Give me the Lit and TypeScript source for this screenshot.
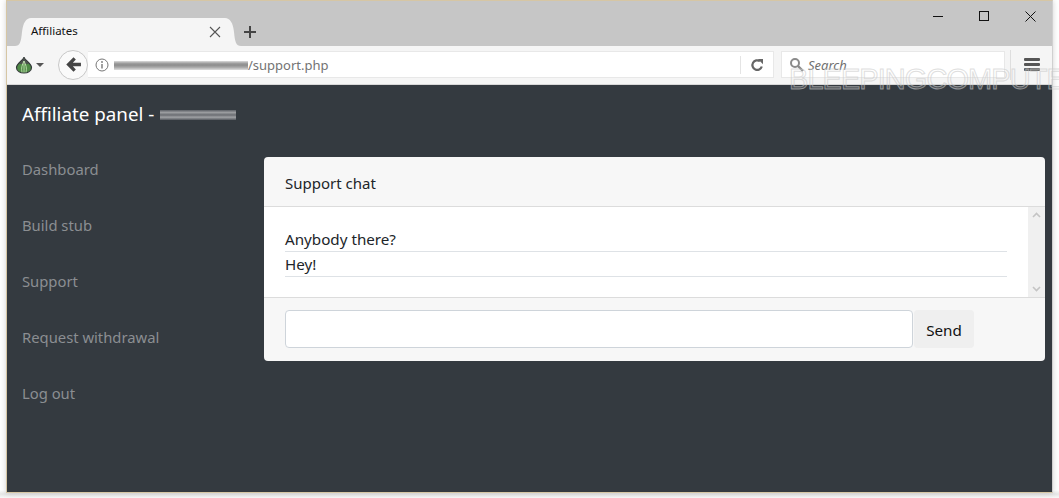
import { LitElement, html, css } from "lit";
import { customElement } from "lit/decorators.js";

const FONT = css`"Noto Sans", "Open Sans", sans-serif`;

@customElement("app-root")
export class AppRoot extends LitElement {
  static styles = css`
    :host {
      display: block;
      width: 1059px;
      height: 498px;
      position: relative;
      overflow: hidden;
      background: linear-gradient(#fff 0, #fff 490px, #e6e6e6 494px, #f8f8f8 498px);
      font-family: ${FONT};
      box-sizing: border-box;
    }
    * { box-sizing: border-box; }
    .win {
      margin: 0 6px 0 6px;
      height: 493px;
      display: flex;
      flex-direction: column;
      border-top: 1px solid #d6c6a4;
      border-bottom: 1px solid #d6c6a4;
      border-left: 1px solid #d6c6a4;
      border-right: 1px solid #d0d0d0;
      background: #343a40;
      box-shadow: 0 0 6px rgba(0,0,0,.18);
    }
    .titlebar {
      height: 45px;
      background: #c6c6c6;
      position: relative;
      display: flex;
      align-items: flex-end;
      padding-left: 8px;
      flex: none;
    }
    .tabshape { width: 226px; height: 28px; display: block; flex: none; }
    .tabwrap { position: relative; width: 226px; height: 28px; flex: none; }
    .tabtext {
      position: absolute; left: 16px; top: 5px;
      font-size: 11.5px; line-height: 16px; color: #111;
    }
    .tabx { position: absolute; left: 194px; top: 8px; width: 12px; height: 12px; }
    .plus { width: 14px; height: 14px; margin: 0 0 7px 2px; }
    .winbtns {
      position: absolute; right: -1px; top: 0; display: flex;
    }
    .winbtn { width: 46px; height: 30px; display: flex; align-items: center; justify-content: center; }
    .toolbar {
      height: 39px;
      flex: none;
      background: #f5f5f5;
      display: flex;
      align-items: center;
      padding: 0 0 1px 8px;
      border-bottom: 1px solid #d8d8d8;
    }
    .onion { width: 18px; height: 18px; flex: none; }
    .caret { width: 0; height: 0; border-left: 4px solid transparent; border-right: 4px solid transparent; border-top: 4px solid #555; margin: 0 0 0 3px; flex: none; }
    .urlbar {
      width: 686px;
      height: 27px;
      flex: none;
      background: #fff;
      border: 1px solid #e8e8e8;
      border-left: none;
      display: flex;
      align-items: center;
      position: relative;
    }
    .back {
      width: 30px; height: 30px; border-radius: 50%;
      background: #fafafa; border: 1px solid #c8c8c8;
      display: flex; align-items: center; justify-content: center;
      margin-left: 14px; flex: none;
    }
    .info { width: 14px; height: 14px; margin-left: 7px; flex: none; }
    .blur {
      background: linear-gradient(#dcdcdc, #a0a0a0 25%, #8c8c8c 45%, #a8a8a8 70%, #dedede);
      filter: blur(.7px);
      flex: none;
    }
    .blur.url { width: 134px; height: 9px; margin-left: 5px; margin-top: 2px; }
    .path { font-size: 13px; color: #737373; line-height: 18px; }
    .reload-box {
      margin-left: auto; width: 33px; height: 18px;
      border-left: 1px solid #e4e4e4;
      display: flex; align-items: center; justify-content: center;
    }
    .search {
      margin-left: 7px; width: 224px; height: 27px; flex: none;
      background: #fff; border: 1px solid #e8e8e8;
      display: flex; align-items: center; padding-left: 7px; gap: 4px;
    }
    .search span { font-size: 13px; font-style: italic; color: #6f6f6f; }
    .sep { width: 1px; height: 30px; background: #dedede; margin-left: 5px; flex: none; }
    .burger { margin-left: 13px; width: 16px; display: flex; flex-direction: column; gap: 2px; flex: none; }
    .burger i { display: block; height: 3px; border-radius: 1px; background: #555; }
    .page {
      flex: 1;
      display: flex;
      flex-direction: column;
      background: #343a40;
      padding-left: 15px;
    }
    .brand {
      height: 72px; flex: none;
      display: flex; align-items: center; gap: 6px;
      color: #fff; font-size: 18.8px; padding-bottom: 14px;
    }
    .blur.brandbar {
      width: 76px; height: 10px; margin-top: 2px;
      background: linear-gradient(#5c6066, #9a9c9f 25%, #6a6d72 50%, #a0a2a5 72%, #55595f);
    }
    .cols { display: flex; }
    .side { width: 242px; flex: none; display: flex; flex-direction: column; margin-top: -2px; }
    .side a {
      height: 56px; line-height: 28px;
      font-size: 14.8px; color: #8b8e92;
    }
    .card {
      width: 781px; height: 204px; flex: none;
      border-radius: 4px; overflow: hidden;
      background: #f7f7f7;
      display: flex; flex-direction: column;
      color: #212529;
    }
    .card-h {
      height: 50px; flex: none; display: flex; align-items: center;
      padding: 2px 0 0 21px; font-size: 15px;
      border-bottom: 1px solid #dcdcdc;
    }
    .card-b {
      height: 91px; flex: none; background: #fff; display: flex;
      border-bottom: 1px solid #dcdcdc;
    }
    .msgs { flex: 1; padding: 20px 21px 0 21px; }
    .msg { height: 25px; line-height: 25px; font-size: 15.2px; border-bottom: 1px solid #dee2e6; }
    .sb { width: 17px; flex: none; background: #f0f0f0; display: flex; flex-direction: column; justify-content: space-between; align-items: center; padding: 5px 0; }
    .card-f { flex: 1; display: flex; padding: 12px 0 0 21px; gap: 1px; }
    .input { width: 628px; height: 38px; background: #fff; border: 1px solid #ced4da; border-radius: 4px; }
    .send {
      width: 60px; height: 38px; background: #efefef; border-radius: 4px;
      display: flex; align-items: center; justify-content: center;
      font-size: 15.2px; color: #111; padding-top: 1px;
    }
    .wm {
      position: absolute; left: 789px; top: 60px;
      font-size: 29px; line-height: 38px; white-space: nowrap;
      letter-spacing: -.95px;
      font-family: "Liberation Sans", sans-serif;
      color: rgba(255,255,255,.12);
      -webkit-text-stroke: 1px rgba(200,200,200,.6);
      pointer-events: none;
    }
  `;

  render() {
    return html`
      <div class="win">
        <div class="titlebar">
          <div class="tabwrap">
            <svg class="tabshape" viewBox="0 0 226 28">
              <path d="M0 28C5 28 6 24 7 14 8 5 11 0 16 0H210C215 0 218 5 219 14 220 24 221 28 226 28Z" fill="#f5f5f5" />
            </svg>
            <span class="tabtext">Affiliates</span>
            <svg class="tabx" viewBox="0 0 12 12"><path d="M1 1 11 11M11 1 1 11" stroke="#555" stroke-width="1.1" fill="none" /></svg>
          </div>
          <svg class="plus" viewBox="0 0 14 14"><path d="M7 1V13M1 7H13" stroke="#444" stroke-width="2" fill="none" /></svg>
          <div class="winbtns">
            <div class="winbtn"><svg width="10" height="10"><path d="M0 5.5H10" stroke="#111" /></svg></div>
            <div class="winbtn"><svg width="10" height="10"><rect x=".5" y=".5" width="9" height="9" fill="none" stroke="#111" /></svg></div>
            <div class="winbtn"><svg width="11" height="11"><path d="M.5.5 10.5 10.5M10.5.5.5 10.5" stroke="#111" fill="none" /></svg></div>
          </div>
        </div>
        <div class="toolbar">
          <svg class="onion" viewBox="0 0 18 18">
            <path d="M9 1C9 4 1.500 7 1.500 11.500 1.500 15 5 17 9 17 13 17 16.500 15 16.500 11.500 16.500 7 9 4 9 1Z" fill="#4f8a46" stroke="#33383a" stroke-width="1.2" />
            <path d="M9 1C8 4 5.500 5.500 4 8L14 8C12.500 5.500 10 4 9 1Z" fill="#4a4f4c" />
            <path d="M9 5C7 9 6 12 7 16.500M9 5C11 9 12 12 11 16.500M9 5V16.500" stroke="#bfe0ae" stroke-width=".9" fill="none" />
          </svg>
          <span class="caret"></span>
          <div class="back">
            <svg width="17" height="17" viewBox="0 0 16 16"><path d="M8 1.200 1.200 8 8 14.800 10.200 12.600 7.400 9.700H15V6.300H7.400L10.200 3.400Z" fill="#444" /></svg>
          </div>
          <div class="urlbar">
            <svg class="info" viewBox="0 0 14 14">
              <circle cx="7" cy="7" r="6" fill="none" stroke="#777" stroke-width="1" />
              <path d="M7 6V10.500" stroke="#777" stroke-width="1.400" /><circle cx="7" cy="4" r=".9" fill="#777" />
            </svg>
            <div class="blur url"></div>
            <span class="path">/support.php</span>
            <div class="reload-box">
              <svg width="14" height="14" viewBox="0 0 14 14"><path d="M11.800 8.500A4.800 4.800 0 1 1 10 3.200" fill="none" stroke="#666" stroke-width="2.200" /><path d="M7.800 1 13 1V6.200Z" fill="#666" /></svg>
            </div>
          </div>
          <div class="search">
            <svg width="15" height="15" viewBox="0 0 15 15"><circle cx="6" cy="6" r="4" fill="none" stroke="#8a8a8a" stroke-width="2" /><path d="M9 9 14 14" stroke="#8a8a8a" stroke-width="2.400" /></svg>
            <span>Search</span>
          </div>
          <div class="sep"></div>
          <div class="burger"><i></i><i></i><i></i></div>
        </div>
        <div class="page">
          <div class="brand"><span>Affiliate panel -</span><div class="blur brandbar"></div></div>
          <div class="cols">
            <nav class="side">
              <a>Dashboard</a><a>Build stub</a><a>Support</a><a>Request withdrawal</a><a>Log out</a>
            </nav>
            <section class="card">
              <div class="card-h">Support chat</div>
              <div class="card-b">
                <div class="msgs"><div class="msg">Anybody there?</div><div class="msg">Hey!</div></div>
                <div class="sb">
                  <svg width="9" height="6"><path d="M1 5 4.500 1.500 8 5" fill="none" stroke="#c4c4c4" stroke-width="1.600" /></svg>
                  <svg width="9" height="6"><path d="M1 1 4.500 4.500 8 1" fill="none" stroke="#c4c4c4" stroke-width="1.600" /></svg>
                </div>
              </div>
              <div class="card-f"><div class="input"></div><div class="send">Send</div></div>
            </section>
          </div>
        </div>
      </div>
      <div class="wm">BLEEPINGCOMPUTE</div>
    `;
  }
}
